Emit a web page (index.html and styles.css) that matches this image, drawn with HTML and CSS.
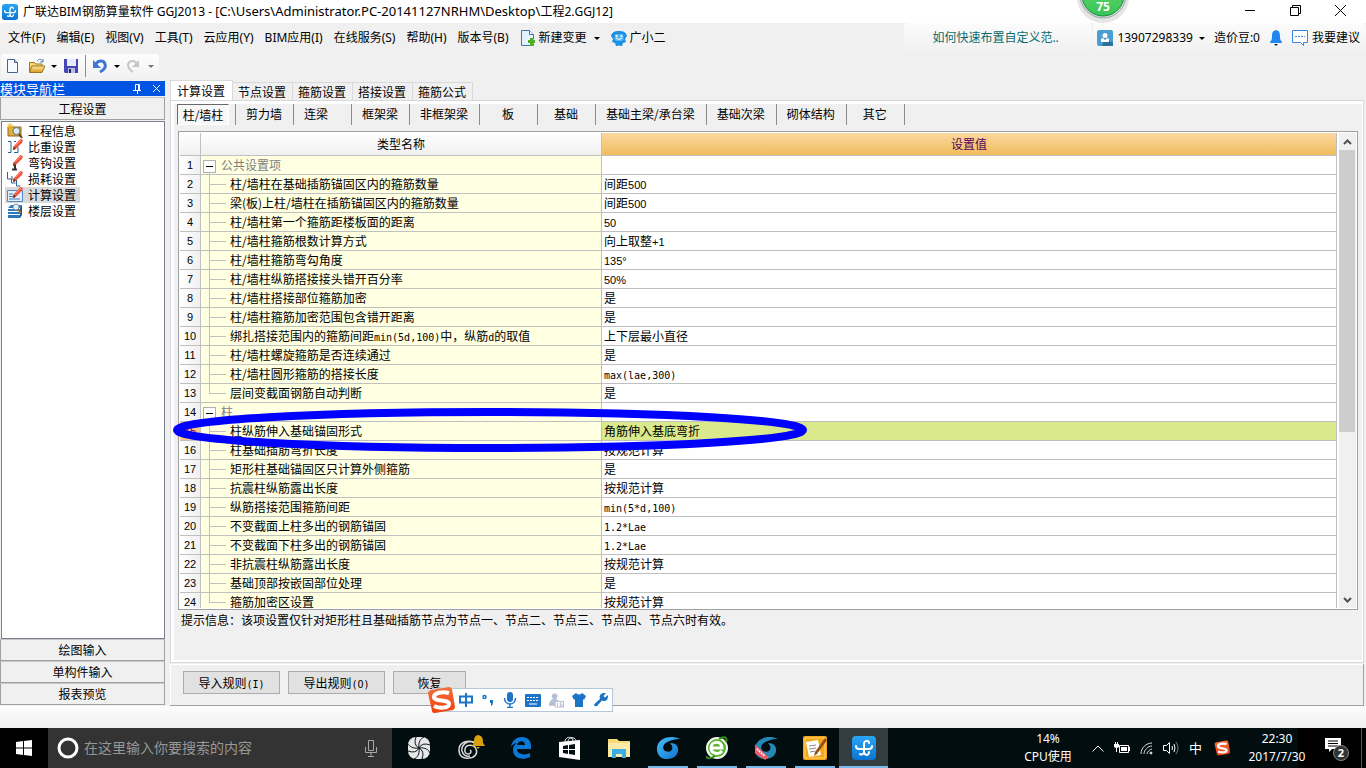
FILE: index.html
```html
<!DOCTYPE html>
<html lang="zh-CN">
<head>
<meta charset="utf-8">
<title>广联达BIM钢筋算量软件 GGJ2013</title>
<link rel="stylesheet" href="styles.css">
</head>
<body>
<svg class="defs" aria-hidden="true">
  <defs>
    <linearGradient id="gBlue" x1="0" y1="0" x2="0" y2="1"><stop offset="0" stop-color="#2aa5f5"/><stop offset="1" stop-color="#0a74d0"/></linearGradient>
    <linearGradient id="gFold" x1="0" y1="0" x2="0" y2="1"><stop offset="0" stop-color="#fde9a0"/><stop offset="1" stop-color="#d9961c"/></linearGradient>
    <linearGradient id="gSwirl" x1="0" y1="0" x2="1" y2="1"><stop offset="0" stop-color="#49c0f4"/><stop offset="1" stop-color="#0f6fd0"/></linearGradient>
    <linearGradient id="gBall" x1="0" y1="0" x2="0" y2="1"><stop offset="0" stop-color="#6bdc70"/><stop offset="1" stop-color="#37c455"/></linearGradient>
    <linearGradient id="gSogou" x1="0" y1="0" x2="0" y2="1"><stop offset="0" stop-color="#f2703c"/><stop offset="1" stop-color="#f0420e"/></linearGradient>
    <symbol id="applogo" viewBox="0 0 24 24"><rect width="24" height="24" rx="4" fill="url(#gBlue)"/><path d="M17 7c0-3-5-3-5 1v7c0 5 5 5 5 1M4 10c0 2 1 3 3 3h10c2 0 3-1 3-3M12 13v3c0 2-2 3-4 2" fill="none" stroke="#fff" stroke-width="2" stroke-linecap="round"/></symbol>
    <symbol id="sogou" viewBox="0 0 28 28"><path d="M4 4 22 1q2 0 3 2l3 18q0 2-2 3L8 27q-3 0-3-2L1 7q0-2 3-3z" fill="url(#gSogou)"/><path d="M22 7C15 5 7 7 7 11c0 5 15 2 15 7 0 4-9 5-15 2" fill="none" stroke="#fff" stroke-width="4"/></symbol>
    <symbol id="pencil" viewBox="0 0 12 12"><path d="M2 8 9 0l3 1-1 3-7 7-3 1z" fill="#f0533c"/><path d="m1 12 1-4 2 3z" fill="#7a2a18"/><path d="m4 7 6-6" stroke="#ff9c84"/></symbol>
    <symbol id="swirl" viewBox="0 0 26 26"><path d="M26 3C13-2 1 4 1 14c0 7 5 11 11 11 7 0 12-4 12-10 0-5-4-8-9-7 4 2 4 9-2 9-4 0-6-3-5-6 1-4 8-7 18-8z"/></symbol>
  </defs>
</svg>

<div class="app">
  <header class="titlebar">
    <svg class="i16" viewBox="0 0 24 24"><use href="#applogo"/></svg>
    <h1 class="title">广联达BIM钢筋算量软件 GGJ2013 - [<span class="path">C:\Users\Administrator.PC-20141127NRHM\Desktop\</span>工程2.GGJ12]</h1>
    <div class="winbtns">
      <button aria-label="最小化"><svg width="11" height="11" viewBox="0 0 11 11"><path d="M0 5.500h10" stroke="#000"/></svg></button>
      <button aria-label="还原"><svg width="11" height="11" viewBox="0 0 11 11" fill="none" stroke="#000"><path d="M.5 2.500h8v8h-8zM2.500 2.500v-2h8v8h-2"/></svg></button>
      <button aria-label="关闭"><svg width="11" height="11" viewBox="0 0 11 11"><path d="m0 0 11 11M11 0 0 11" stroke="#000"/></svg></button>
    </div>
  </header>

  <nav class="menubar">
    <button>文件(F)</button><button>编辑(E)</button><button>视图(V)</button><button>工具(T)</button><button>云应用(Y)</button><button>BIM应用(I)</button><button>在线服务(S)</button><button>帮助(H)</button><button>版本号(B)</button>
    <button class="withicon"><svg class="i16" viewBox="0 0 16 16"><path d="M1.500.5h8l4 4v11h-12z" fill="#e4f1fb" stroke="#3a7ab0"/><path d="M9.500.5v4h4" fill="#fff" stroke="#3a7ab0"/><path d="m11 7 5 4.500-5 4.500-5-4.500z" fill="#fff" opacity=".7"/><path d="M10 8h3v2h2v3h-2v3h-3v-3H8v-3h2z" fill="#4fae28"/></svg>新建变更<i class="caret"></i></button>
    <button class="withicon"><svg class="i16" viewBox="0 0 16 16"><path d="M8 1c4 0 7 1 8 5l-2 3 1 3-3 1-1 3H9l-1-1-1 1H5l-1-3-3-1 1-3-2-3c1-4 4-5 8-5z" fill="#1d8fe0"/><path d="M4 4h8l1 5-2 2H5L3 9z" fill="#52b6f5"/><circle cx="5.500" cy="6" r="1" fill="#fff"/><circle cx="10.500" cy="6" r="1" fill="#fff"/><path d="M5 8q3 3 6 0" stroke="#fff" fill="none"/></svg>广小二</button>
    <div class="menuright">
      <a class="tip" href="#">如何快速布置自定义范..</a>
      <div class="account">
        <button><svg class="i16" viewBox="0 0 16 16"><rect width="16" height="16" rx="2" fill="#4a9fce"/><path d="m8 8 8 5v3H5z" fill="#2b729b"/><circle cx="8" cy="5.500" r="2.500" fill="#fff"/><path d="M4 12V9l2-1 2 2 2-2 2 1v3z" fill="#fff"/></svg>13907298339<i class="caret"></i></button>
        <span class="beans">造价豆:0</span>
        <button aria-label="通知"><svg width="14" height="16" viewBox="0 0 14 16"><path d="M7 0c4 1 4 4 4 7 0 3 1 4 2 5v1H1v-1c1-1 2-2 2-5 0-3 0-6 4-7z" fill="#2087f2"/><path d="M5 14h4l-2 2z" fill="#123"/></svg></button>
        <button><svg class="i16" viewBox="0 0 16 16"><path d="M.5.5h15v12h-4v3l-3-3h-8z" fill="#fff" stroke="#3b86d8"/><path d="M3 6.500h10" stroke="#3b86d8" stroke-dasharray="2 1"/></svg>我要建议</button>
      </div>
    </div>
  </nav>

  <div class="toolbar">
    <div class="tools">
      <button aria-label="新建"><svg class="i16" viewBox="0 0 16 16"><path d="M2.500 1.500h7l3 3v10h-10z" fill="#f7fbff" stroke="#4b6582"/><path d="M9.500 1.500v3h3" fill="#b9d2e8" stroke="#4b6582"/></svg></button>
      <button aria-label="打开"><svg class="i16" viewBox="0 0 16 16"><path d="M.5 14V4.500h5l1 1.500H13v8z" fill="#f5d679" stroke="#a0761c"/><path d="M3 8h13l-3 6.500H.5z" fill="url(#gFold)" stroke="#a0761c"/><path d="M8 3c2-3 5-2 6 1m0-3v3h-3" stroke="#5a86b8" fill="none"/></svg></button>
      <i class="caret"></i>
      <button aria-label="保存"><svg class="i16" viewBox="0 0 16 16"><path d="M1 1h14v14H2l-1-1z" fill="#4646b4"/><path d="M4 1h9v7H4z" fill="#e8ecff"/><path d="M5 10h7v5H5z" fill="#b7bfe6"/><path d="M6 11h2v4H6z" fill="#23235e"/></svg></button>
      <span class="vsep"></span>
      <button aria-label="撤销"><svg class="i16" viewBox="0 0 16 16"><path d="M4 6c2-4 8-4 9 0 1 3-1 6-5 8" stroke="#3c78d4" stroke-width="3" fill="none"/><path d="M1 2v8h8z" fill="#3c78d4"/></svg></button>
      <i class="caret"></i>
      <button aria-label="重做" disabled><svg class="i16" viewBox="0 0 16 16"><path d="M11 6C8 1 2 3 2 7c0 3 2 5 5 7" stroke="#c6c6c6" stroke-width="2" fill="none"/><path d="M13 2v7H6z" fill="#c6c6c6"/></svg></button>
      <i class="caret off"></i>
    </div>
  </div>

  <main class="main">
    <aside class="nav">
      <div class="navhead"><span>模块导航栏</span>
        <button aria-label="固定"><svg width="9" height="10" viewBox="0 0 9 10"><path d="M2.500 6V.5h4V6M0 6.500h8M4.500 6.500V10M5.500 1v5" stroke="#fff" fill="none"/></svg></button>
        <button aria-label="关闭导航"><svg width="9" height="9" viewBox="0 0 9 9"><path d="m1 1 7 7M8 1 1 8" stroke="#fff"/></svg></button>
      </div>
      <button class="navbtn">工程设置</button>
      <ul class="navlist">
        <li><svg class="i16" viewBox="0 0 16 16"><path d="M1 4h13v9H1z" fill="#e0ac3c" stroke="#94651a"/><path d="M3 0v7M0 3h7M1 1l4 4M5 1 1 5" stroke="#f2c024"/><circle cx="9.500" cy="8" r="3.500" fill="#d5e9f8" stroke="#5c7891"/><path d="m12 11 3 4" stroke="#604020" stroke-width="2"/></svg><span>工程信息</span></li>
        <li><svg class="i16" viewBox="0 0 16 16"><path d="M1 2.500h3v11H1M7 2.500h2M7 13.500h4V8" stroke="#315f97" fill="none"/><use href="#pencil" x="5" y="0" width="11" height="11"/></svg><span>比重设置</span></li>
        <li><svg class="i16" viewBox="0 0 16 16"><path d="M8 7v8M5 14.500h5" stroke="#333" stroke-width="2"/><use href="#pencil" x="5" y="0" width="11" height="11"/></svg><span>弯钩设置</span></li>
        <li><svg class="i16" viewBox="0 0 16 16"><path d="M.5 1v7h4v4h4M5 5v4M9.500 9v6h4" stroke="#315f97" fill="none"/><use href="#pencil" x="5" y="0" width="11" height="11"/></svg><span>损耗设置</span></li>
        <li class="sel"><svg class="i16" viewBox="0 0 16 16"><path d="M.5 3.500h15v11H.5z" fill="#e3eefb" stroke="#5286c4"/><path d="M2 7h4M2 9.500h4M2 12h11" stroke="#4678b5"/><use href="#pencil" x="5" y="0" width="11" height="11"/></svg><span>计算设置</span></li>
        <li><svg class="i16" viewBox="0 0 16 16"><path d="m1 5 3-3h11l-2 3zM1 6h12v2H1zM1 9h12v2H1zM1 12h12v3H1z" fill="#2878bb"/><path d="m13 5 2-3v10l-2 3z" fill="#195486"/><circle cx="9" cy="4" r="3" fill="#e2f0fb" stroke="#7997b0"/><path d="m11 6 3 4" stroke="#9b6c28" stroke-width="2"/></svg><span>楼层设置</span></li>
      </ul>
      <button class="navbtn low">绘图输入</button>
      <button class="navbtn low">单构件输入</button>
      <button class="navbtn low">报表预览</button>
    </aside>

    <section class="work">
      <div class="tabs">
        <button class="on">计算设置</button><button>节点设置</button><button>箍筋设置</button><button>搭接设置</button><button>箍筋公式</button>
      </div>
      <div class="page"><div class="inner">
        <div class="subtabs">
          <div><button class="on">柱/墙柱</button></div><div><button>剪力墙</button></div><div class="left"><button>连梁</button></div><div><button>框架梁</button></div><div><button>非框架梁</button></div><div><button>板</button></div><div><button>基础</button></div><div><button>基础主梁/承台梁</button></div><div><button>基础次梁</button></div><div><button>砌体结构</button></div><div><button>其它</button></div>
        </div>
        <div class="frame">
          <div class="gridwrap">
            <table class="grid">
              <colgroup><col class="c1"><col class="c2"><col></colgroup>
              <thead><tr><th></th><th>类型名称</th><th class="val">设置值</th></tr></thead>
              <tbody>
                <tr class="grp"><th>1</th><td><button class="box" aria-label="折叠"></button>公共设置项</td><td></td></tr>
                <tr><th>2</th><td>柱/墙柱在基础插筋锚固区内的箍筋数量</td><td>间距<b class="num">500</b></td></tr>
                <tr><th>3</th><td>梁(板)上柱/墙柱在插筋锚固区内的箍筋数量</td><td>间距<b class="num">500</b></td></tr>
                <tr><th>4</th><td>柱/墙柱第一个箍筋距楼板面的距离</td><td><b class="num">50</b></td></tr>
                <tr><th>5</th><td>柱/墙柱箍筋根数计算方式</td><td>向上取整<b class="num">+1</b></td></tr>
                <tr><th>6</th><td>柱/墙柱箍筋弯勾角度</td><td><b class="num">135°</b></td></tr>
                <tr><th>7</th><td>柱/墙柱纵筋搭接接头错开百分率</td><td><b class="num">50%</b></td></tr>
                <tr><th>8</th><td>柱/墙柱搭接部位箍筋加密</td><td>是</td></tr>
                <tr><th>9</th><td>柱/墙柱箍筋加密范围包含错开距离</td><td>是</td></tr>
                <tr><th>10</th><td>绑扎搭接范围内的箍筋间距<b>min(5d,100)</b>中，纵筋<b>d</b>的取值</td><td>上下层最小直径</td></tr>
                <tr><th>11</th><td>柱/墙柱螺旋箍筋是否连续通过</td><td>是</td></tr>
                <tr><th>12</th><td>柱/墙柱圆形箍筋的搭接长度</td><td><b>max(lae,300)</b></td></tr>
                <tr class="last"><th>13</th><td>层间变截面钢筋自动判断</td><td>是</td></tr>
                <tr class="grp"><th>14</th><td><button class="box" aria-label="折叠"></button>柱</td><td></td></tr>
                <tr class="cur"><th>15</th><td>柱纵筋伸入基础锚固形式</td><td>角筋伸入基底弯折</td></tr>
                <tr><th>16</th><td>柱基础插筋弯折长度</td><td>按规范计算</td></tr>
                <tr><th>17</th><td>矩形柱基础锚固区只计算外侧箍筋</td><td>是</td></tr>
                <tr><th>18</th><td>抗震柱纵筋露出长度</td><td>按规范计算</td></tr>
                <tr><th>19</th><td>纵筋搭接范围箍筋间距</td><td><b>min(5*d,100)</b></td></tr>
                <tr><th>20</th><td>不变截面上柱多出的钢筋锚固</td><td><b>1.2*Lae</b></td></tr>
                <tr><th>21</th><td>不变截面下柱多出的钢筋锚固</td><td><b>1.2*Lae</b></td></tr>
                <tr><th>22</th><td>非抗震柱纵筋露出长度</td><td>按规范计算</td></tr>
                <tr><th>23</th><td>基础顶部按嵌固部位处理</td><td>是</td></tr>
                <tr class="last"><th>24</th><td>箍筋加密区设置</td><td>按规范计算</td></tr>
              </tbody>
            </table>
          </div>
          <div class="scroll">
            <button aria-label="向上"><svg width="9" height="6" viewBox="0 0 9 6"><path d="m1 5 3.500-3.500L8 5" fill="none" stroke="#505050" stroke-width="2"/></svg></button>
            <div class="track"><div class="thumb"></div></div>
            <button aria-label="向下"><svg width="9" height="6" viewBox="0 0 9 6"><path d="m1 1 3.500 3.500L8 1" fill="none" stroke="#505050" stroke-width="2"/></svg></button>
          </div>
        </div>
        <p class="hint">提示信息：该项设置仅针对矩形柱且基础插筋节点为节点一、节点二、节点三、节点四、节点六时有效。</p>
      </div></div>
      <div class="actions"><button>导入规则<b>(I)</b></button><button>导出规则<b>(O)</b></button><button class="short">恢复</button></div>
    </section>
  </main>
  <div class="status"></div>

  <footer class="taskbar">
    <button class="start" aria-label="开始"><svg width="16" height="16" viewBox="0 0 16 16"><path d="m0 2 7-1v6.500H0zM8 1l8-1v7.500H8zM0 8.500h7V15l-7-1zM8 8.500h8V16l-8-1z" fill="#fff"/></svg></button>
    <label class="search"><svg width="22" height="22" viewBox="0 0 22 22"><circle cx="11" cy="11" r="9" fill="none" stroke="#fff" stroke-width="3"/></svg><input type="text" placeholder="在这里输入你要搜索的内容" aria-label="搜索"><svg width="12" height="17" viewBox="0 0 12 17"><path d="M3.500.5h5v10h-5zM.5 7v5.500h11V7M6 12.500V16M3 16.500h6" fill="none" stroke="#a8a8a8"/></svg></label>
    <div class="tasks">
      <button class="t1" aria-label="助手"><svg width="22" height="22" viewBox="0 0 22 22"><rect width="22" height="22" rx="8" fill="#e8e8e8"/><path d="M11 11C5 12 1 9 0 7M11 11c-1-6 2-10 5-11M11 11c6-1 10 2 11 5M11 11c1 6-2 10-5 11M11 11Q5 8 8 0M11 11q3-6 11-3M11 11q6 3 3 11M11 11q-3 6-11 3" stroke="#0a1517" fill="none"/></svg></button>
      <button class="t2" aria-label="提醒"><svg width="30" height="28" viewBox="0 0 30 28"><path d="M18 9C11 5 2 8 2 16c0 6 4 9 10 8 6 0 9-5 7-9-2-5-10-5-11 0-1 3 1 5 3 5 3 0 4-3 2-4M17 8C9 6 4 12 5 17c1 4 4 6 8 5" fill="none" stroke="#d8d8d8" stroke-width="1.500"/><path d="M21 1c5 1 5 4 5 8l2 3H15l2-3c0-4 0-7 4-8zM19 13h4l-2 2z" fill="#daa10d"/></svg></button>
      <button aria-label="Edge"><svg width="22" height="22" viewBox="0 0 22 22"><path d="M1 10C2 3 7 0 12 0c6 0 9 4 9 9v3H7c0 5 7 7 13 4v4c-8 4-17 1-17-7 0-4 2-6 5-7-4 0-6 2-7 4zm6-2h8c0-5-7-5-8 0z" fill="#0a78d7"/></svg></button>
      <button aria-label="商店"><svg width="22" height="24" viewBox="0 0 22 24"><path d="M0 6 21 4v20L0 21z" fill="#fff"/><path d="M6 6c0-6 8-6 8-1M9 6c0-6 8-5 8-1" fill="none" stroke="#fff"/><path d="m4 10 5-1v4H4zm6-1 6-1v5h-6zm-6 5h5v4l-5-1zm6 0h6v5l-6-1z" fill="#020d10"/></svg></button>
      <button aria-label="文件夹"><svg width="22" height="20" viewBox="0 0 22 20"><path d="M0 1h9l2 2h11v16H0z" fill="#f8d977"/><path d="M0 5h22v14H0z" fill="#ffe9a6"/><path d="M4 20v-9h14v9h-4v-4H8v4z" fill="#3aaee3"/></svg></button>
      <button class="run" aria-label="浏览器"><svg width="24" height="24" viewBox="0 0 26 26" fill="url(#gSwirl)"><use href="#swirl"/></svg></button>
      <button class="run" aria-label="360浏览器"><svg width="24" height="24" viewBox="0 0 24 24"><circle cx="12" cy="12" r="10" fill="#5bb52b" stroke="#f2f8ee" stroke-width="2"/><path d="M2 20C1 23 6 23 10 20M14 3c5-3 9-2 7 3" fill="none" stroke="#2f8a1a" stroke-width="2"/><path d="M6 12h11c0-8-11-7-11 0 0 6 8 7 11 3" fill="none" stroke="#fff" stroke-width="3"/></svg></button>
      <button class="run" aria-label="广联达"><svg width="24" height="24" viewBox="0 0 26 26" fill="#2687b5"><use href="#swirl"/><path d="m1 9 15 14-4 3L1 19z" fill="#ee5a66"/><path d="m3 14 9 8" stroke="#fff" stroke-width="2" stroke-dasharray="2 1"/></svg></button>
      <button class="run" aria-label="记事"><svg width="24" height="24" viewBox="0 0 24 24"><rect width="24" height="24" rx="2" fill="#f3a51c"/><path d="M2 2h20v20H2z" fill="none" stroke="#ffd46b"/><path d="m3 6 12-2 3 15-12 2z" fill="#fff"/><path d="m6 10 7-1M6 13l7-1M7 16l5-1" stroke="#8a8a8a"/><path d="M22 2 12 16l-1 4 3-2L24 4z" fill="#925018"/></svg></button>
      <button class="run act" aria-label="钢筋算量"><svg width="24" height="24" viewBox="0 0 24 24"><use href="#applogo"/></svg></button>
    </div>
    <div class="cpu">14%<br>CPU使用</div>
    <div class="tray">
      <svg width="12" height="7" viewBox="0 0 12 7"><path d="m.5 6.500 5.500-5.500 5.500 5.500" fill="none" stroke="#fff"/></svg>
      <svg width="16" height="12" viewBox="0 0 16 12"><path d="M5.500 3.500h9v7h-9z" fill="none" stroke="#fff"/><path d="M7 5h6v4H7zM15 5h1v4h-1zM0 2h5v3L3 6v4H2V6L0 5zM1 0h1v2H1zM3 0h1v2H3z" fill="#fff"/></svg>
      <svg width="13" height="13" viewBox="0 0 13 13" fill="none" stroke="#ddd"><path d="M1 12C1 6 6 1 12 1M4 12c0-4 4-8 8-8M7 12c0-2 3-5 5-5"/><circle cx="11" cy="11" r="1" fill="#fff"/></svg>
      <svg width="16" height="14" viewBox="0 0 16 14" fill="none" stroke="#fff"><path d="M.5 4.500h3l3-3v11l-3-3h-3zM9 5q1 2 0 4M11 3q2 4 0 8"/><path d="M13 1q4 6 0 12" stroke="#777"/></svg>
      <span class="ime">中</span>
      <svg width="16" height="16" viewBox="0 0 28 28"><use href="#sogou"/></svg>
    </div>
    <div class="clock">22:30<br>2017/7/30</div>
    <button class="notify" aria-label="通知"><svg width="26" height="26" viewBox="0 0 26 26"><path d="M1 2h16v11H8l-3 3v-3H1z" fill="#fff"/><path d="M4 5h10M4 7.500h10M4 10h10" stroke="#000"/><circle cx="17" cy="17" r="7.500" fill="#333" stroke="#888"/><text x="17" y="21" text-anchor="middle" class="badge">2</text></svg></button>
    <span class="peek"></span>
  </footer>

  <svg class="mark" viewBox="0 0 636 46" width="636" height="46"><ellipse cx="318" cy="23" rx="313" ry="18" fill="none" stroke="#00f" stroke-width="8"/></svg>
  <svg class="ball" viewBox="0 0 60 30" width="60" height="30"><circle cx="30" cy="-3" r="26" fill="#000" opacity=".1"/><circle cx="30" cy="-5" r="23" fill="#d4dcd5" stroke="#9ea59f"/><circle cx="30" cy="-5" r="21" fill="url(#gBall)" stroke="#178a4a"/><text x="30" y="11" text-anchor="middle" class="score">75</text></svg>
  <div class="imebar">
    <svg width="28" height="28" viewBox="0 0 28 28"><use href="#sogou"/></svg>
    <svg width="14" height="14" viewBox="0 0 14 14"><path d="M1 3.500h12v6H1zM7 0v14" fill="none" stroke="#1d73c6" stroke-width="2"/></svg>
    <svg width="14" height="14" viewBox="0 0 14 14"><circle cx="3.500" cy="4" r="1.500" fill="none" stroke="#1d73c6" stroke-width="1.500"/><path d="M9 7h3v3q0 2-2 3v-3H9z" fill="#1d73c6"/></svg>
    <svg width="14" height="16" viewBox="0 0 14 16"><rect x="4" width="6" height="10" rx="3" fill="#1d73c6"/><path d="M1.500 6c0 8 11 8 11 0M7 12v3M4 15.500h6" fill="none" stroke="#1d73c6" stroke-width="1.500"/></svg>
    <svg width="16" height="13" viewBox="0 0 16 13"><rect width="16" height="13" rx="1" fill="#1d73c6"/><path d="M2 3.500h12M2 6.500h12" stroke="#fff" stroke-dasharray="2 1"/><path d="M4 10h8" stroke="#fff"/></svg>
    <svg width="15" height="16" viewBox="0 0 16 16"><circle cx="6" cy="4" r="3" fill="#b5bfd3"/><path d="M0 14c0-5 3-7 6-7s4 1 4 3v4z" fill="#b5bfd3"/><path d="M6.500 9.500h9v6h-9zM9 11v4M12 11h2M12 11v4h2v-2h-2" fill="#fff" stroke="#b5bfd3"/></svg>
    <svg width="14" height="14" viewBox="0 0 14 14"><path d="M4 0q3 3 6 0l4 3-2 4-1-1v8H3V6L2 7 0 3z" fill="#1d73c6"/></svg>
    <svg width="14" height="14" viewBox="0 0 14 14"><path d="M9 0q2-.5 3 0L9.500 3l1.500 1.500L14 2q.5 5-3 6-2 0-3-.5L3 13q-2 1-3-1 0-1 6-6C5 3 6 1 9 0z" fill="#1d73c6"/></svg>
  </div>
</div>
</body>
</html>
```
FILE: styles.css
```css
* { box-sizing: border-box; }
body { margin: 0; background: #f0f0f0; color: #000; font: 12px/16px "Noto Sans", "Noto Sans CJK SC", sans-serif; }
button { margin: 0; padding: 0; border: 0; background: none; color: inherit; font: inherit; white-space: nowrap; }
svg { display: block; flex: none; }
.defs { position: absolute; width: 0; height: 0; }
.i16 { width: 16px; height: 16px; }
.app { position: relative; display: flex; flex-direction: column; height: 100vh; overflow: hidden; }
.caret { flex: none; border: 3px solid transparent; border-top-color: #000; border-bottom: 0; }
.caret.off { border-top-color: #777; }

.titlebar { display: flex; align-items: center; gap: 5px; height: 23px; padding-left: 2px; background: #fff; }
.title { flex: 1; margin: 0; font-size: 12px; font-weight: 400; white-space: nowrap; }
.path { font-size: 13px; }
.winbtns { display: flex; gap: 34px; padding: 0 20px 3px 0; }

.menubar { display: flex; align-items: center; gap: 11px; height: 30px; padding-left: 8px; }
.menubar .withicon { display: flex; align-items: center; gap: 3px; }
.withicon .caret { margin-left: 4px; }
.menuright { display: flex; align-self: stretch; margin-left: auto; }
.tip, .account { display: flex; align-items: center; background: linear-gradient(#fcfcfc, #f0f0f0); border-radius: 4px 4px 0 0; }
.tip { width: 188px; padding-left: 28px; margin-right: 1px; color: #0b6b6b; text-decoration: none; }
.account { gap: 9px; padding: 0 6px 0 4px; }
.account button { display: flex; align-items: center; gap: 4px; }
.account .caret { margin-left: 2px; }

.toolbar { display: flex; align-items: center; height: 27px; padding-bottom: 1px; }
.tools { display: flex; align-items: center; gap: 6px; height: 24px; margin-left: 1px; padding: 0 5px 0 4px; background: linear-gradient(#fdfdfd, #f2f2f2); border-radius: 3px; }
.vsep { width: 1px; height: 22px; background: #8c8c8c; }
.tools button:nth-child(2) { margin-left: 2px; }

.main { flex: 1; min-height: 0; display: flex; gap: 4px; padding-right: 2px; font-family: "Noto Sans CJK SC", sans-serif; }
.nav { width: 166px; flex: none; display: flex; flex-direction: column; padding: 1px 1px 1px 0; }
.navhead { display: flex; align-items: center; gap: 10px; height: 15px; padding-right: 4px; background: #0054e3; color: #fff; font-size: 13px; line-height: 15px; }
.navhead span { flex: 1; }
.navbtn { flex: none; height: 23px; margin-top: 1px; border: 1px solid #a0a0a0; border-top-color: #c8c8c8; background: #f0f0f0; }
.navbtn.low { height: 22px; margin: 0; }
.navlist { flex: 1; margin: 1px 0 0 1px; padding: 1px 3px; list-style: none; background: #fff; border: 1px solid #7a7f8c; }
.navlist li { display: flex; gap: 5px; height: 16px; width: 75px; padding-left: 2px; line-height: 16px; }
.navlist .sel { background: #d9d9d9; }

.work { flex: 1; min-width: 0; display: flex; flex-direction: column; }
.tabs { display: flex; align-items: flex-end; height: 20px; }
.tabs button { height: 18px; padding: 1px 6px 0 5px; border: 1px solid #d9d9d9; border-bottom: 0; border-left: 0; line-height: 16px; }
.tabs .on { height: 20px; padding: 0 7px 0 6px; border-left: 1px solid #d9d9d9; background: #fff; }
.page { flex: 1; min-height: 0; display: flex; padding: 3px 1px 2px 3px; background: #fff; border: 1px solid #d9d9d9; }
.inner { flex: 1; min-width: 0; display: flex; flex-direction: column; padding: 0 4px; background: #f0f0f0; }
.subtabs { display: flex; height: 27px; margin-left: -2px; }
.subtabs div { height: 21px; min-width: 58px; padding: 0 11px 0 10px; border-right: 1px solid #8c8c8c; text-align: center; line-height: 20px; }
.subtabs .left { text-align: left; }
.subtabs div:first-child { min-width: 60px; padding: 0 6px 0 1px; }
.subtabs .on { height: 21px; width: 52px; border: 1px solid #fff; border-top-color: #696969; border-left-color: #696969; background: #f8f8f8; line-height: 19px; }
.frame { flex: 1; min-height: 0; display: flex; gap: 2px; padding: 1px; border: 1px solid #a0a0a0; background: #fff; }
.gridwrap { flex: 1; min-width: 0; overflow: hidden; }
.grid { width: 100%; table-layout: fixed; border-collapse: separate; border-spacing: 0; line-height: 18px; }
.c1 { width: 21px; }
.c2 { width: 401px; }
.grid th, .grid td { height: 19px; padding: 0; border: solid #c0c0c0; border-width: 0 1px 1px 0; font-weight: 400; text-align: left; white-space: nowrap; overflow: hidden; }
.grid thead th { height: 23px; line-height: 22px; text-align: center; background: linear-gradient(#fff, #f0f0f0); }
.grid thead .val { background: linear-gradient(#fad8a0, #f0bd5c); color: #5c005c; }
.grid tbody th { text-align: center; background: linear-gradient(90deg, #fff, #f0f0f0); font: 11px/18px "Liberation Sans", sans-serif; }
.grid tbody td:nth-child(2) { padding: 0 0 0 29px; background: linear-gradient(#c0c0c0, #c0c0c0) 8px 0 / 1px 100% no-repeat, linear-gradient(#c0c0c0, #c0c0c0) 8px 9px / 17px 1px no-repeat, #ffffe1; }
.grid .last td:nth-child(2) { background-size: 1px 10px, 17px 1px, auto; }
.grid .grp td:nth-child(2) { padding-left: 2px; color: #808080; background: linear-gradient(#c0c0c0, #c0c0c0) 8px 15px / 1px 4px no-repeat, #ffffe1; }
.grid td:nth-child(3) { padding-left: 2px; background: #fff; }
.grid .cur th { background: #fbc97f; color: #80006b; }
.grid .cur td:nth-child(3) { background: #d9e98c; }
.grid b, .actions b { font: 10px "DejaVu Sans Mono", monospace; }
.grid .num { font: 11px "Liberation Sans", sans-serif; }
.box { width: 13px; height: 13px; margin-right: 5px; vertical-align: middle; border: 1px solid #b0b0b0; background: linear-gradient(#000, #000) center / 7px 1px no-repeat, #fff; }
.scroll { width: 17px; display: flex; flex-direction: column; background: #f0f0f0; }
.scroll button { height: 17px; display: grid; place-items: center; }
.track { flex: 1; padding-right: 1px; }
.thumb { height: 64%; background: #cdcdcd; }
.hint { height: 50px; margin: 0; padding: 2px 3px; white-space: nowrap; }
.actions { display: flex; align-items: center; gap: 8px; height: 42px; margin-top: 1px; padding: 0 13px 4px; border: solid #a0a0a0; border-width: 0 1px 1px 0; box-shadow: inset 1px 1px #fff; }
.actions button { width: 97px; height: 23px; border: 1px solid #adadad; background: #e1e1e1; }
.actions .short { width: 73px; }
.status { height: 22px; background: linear-gradient(#fdfdfd, #efefef); }

.taskbar { display: flex; height: 40px; background: linear-gradient(90deg, #020d10 95%, #000 95%); color: #fff; }
.start { width: 48px; display: grid; place-items: center; background: #000; }
.search { width: 344px; display: flex; align-items: center; gap: 5px; padding: 0 15px 0 9px; background: #333; }
.search input { flex: 1; min-width: 0; padding: 0; border: 0; background: none; color: #fff; font: 14px/20px "Noto Sans", "Noto Sans CJK SC", sans-serif; }
.search input::placeholder { color: #979797; opacity: 1; }
.tasks { display: flex; }
.tasks button { width: 49px; display: grid; place-items: center; }
.tasks .t1 { width: 53px; }
.tasks .t2 { width: 51px; padding-left: 2px; }
.tasks .run { background: linear-gradient(#76b9ed, #76b9ed) center bottom / 40px 2px no-repeat; }
.tasks .act { background: linear-gradient(#76b9ed, #76b9ed) center bottom / 100% 2px no-repeat, #343d40; }
.cpu, .clock { text-align: center; line-height: 18px; padding-top: 2px; white-space: nowrap; }
.cpu { width: 60px; margin-left: auto; }
.tray { display: flex; align-items: center; gap: 10px; padding: 0 13px 0 14px; }
.ime { font-size: 13px; }
.ime + svg { margin-left: 2px; }
.clock { width: 68px; }
.notify { width: 50px; display: grid; place-items: center; padding: 2px 0 0 2px; }
.peek { width: 1px; margin: 0 4px 0 0; background: #555; }
.badge { font: bold 11px "Noto Sans", sans-serif; fill: #fff; }
.score { font: bold 12px "Noto Sans", sans-serif; fill: #fff; }

.mark { position: absolute; left: 172px; top: 407px; pointer-events: none; }
.ball { position: absolute; left: 1073px; top: 0; }
.imebar { position: absolute; left: 432px; top: 688px; display: flex; align-items: center; gap: 8px; height: 24px; padding-right: 4px; background: #fff; border: 1px solid #b4c8dc; }
.imebar svg:first-child { margin: 0 -4px 0 -6px; }
```
